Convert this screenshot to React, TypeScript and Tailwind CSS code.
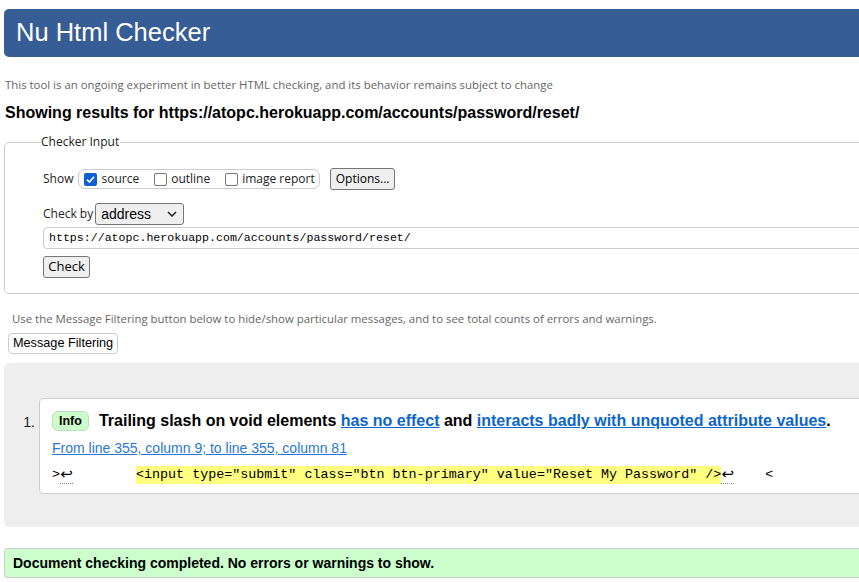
import React from "react";

const ui = { fontFamily: '"Open Sans", "Noto Sans", sans-serif' };
const arial = { fontFamily: '"Liberation Sans", Arial, sans-serif' };
const mono = { fontFamily: '"Liberation Mono", "DejaVu Sans Mono", monospace' };
const sym = { fontFamily: '"DejaVu Sans", sans-serif' };

function Box({ checked, label }: { checked?: boolean; label: string }) {
  return (
    <label className="flex items-center gap-[4px] text-[12px] text-[#222] whitespace-nowrap" style={ui}>
      {checked ? (
        <span className="w-[13px] h-[13px] rounded-[2px] bg-[#0b5fd0] flex items-center justify-center shrink-0">
          <svg width="11" height="11" viewBox="0 0 11 11">
            <path d="M2 5.6 L4.4 8 L9 2.8" stroke="white" strokeWidth="1.7" fill="none" />
          </svg>
        </span>
      ) : (
        <span className="w-[13px] h-[13px] rounded-[2px] border border-[#767676] bg-white shrink-0" />
      )}
      <span>{label}</span>
    </label>
  );
}

export default function App() {
  return (
    <div className="w-[859px] h-[582px] overflow-hidden bg-white">
      <div className="w-[1000px]" style={arial}>
        <div className="ml-[4px] mt-[9px] h-[48px] bg-[#365d95] rounded-l-[5px] flex items-center pl-[12px]">
          <h1 className="text-white text-[25.5px] leading-none" style={arial}>Nu Html Checker</h1>
        </div>
        <p className="ml-[5px] mt-[19px] text-[11.4px] text-[#666]" style={ui}>
          This tool is an ongoing experiment in better HTML checking, and its behavior remains subject to change
        </p>
        <p className="ml-[5px] mt-[10px] text-[16px] font-bold text-black leading-[20px]">
          Showing results for https://atopc.herokuapp.com/accounts/password/reset/
        </p>

        <fieldset className="ml-[4px] mt-[10px] border border-[#ccc] rounded-l-[5px] pl-[38px] h-[161px]">
          <legend className="-ml-[2px] text-[12px] text-[#222] pr-[1px]" style={ui}>Checker Input</legend>
          <div className="flex items-center mt-[17px] h-[22px]">
            <span className="text-[12px] text-[#222] mr-[5px]" style={ui}>Show</span>
            <div className="flex items-center gap-[15px] border border-[#ccc] rounded-[7px] h-[20px] pl-[5px] pr-[4px] shrink-0">
              <Box checked label="source" />
              <Box label="outline" />
              <Box label="image report" />
            </div>
            <button className="ml-[10px] h-[22px] px-[5px] bg-[#efefef] border border-[#767676] rounded-[3px] text-[12px] text-black" style={ui}>
              Options...
            </button>
          </div>
          <div className="flex items-center mt-[13px] h-[22px]">
            <span className="text-[12px] text-[#222] mr-[2px]" style={ui}>Check by</span>
            <div className="w-[89px] h-[22px] border border-[#767676] rounded-[3px] bg-[#efefef] flex items-center justify-between pl-[5px] pr-[6px]">
              <span className="text-[14px] text-black" style={arial}>address</span>
              <svg width="10" height="6" viewBox="0 0 10 6">
                <path d="M1 1 L5 5 L9 1" stroke="#222" strokeWidth="1.5" fill="none" />
              </svg>
            </div>
          </div>
          <div className="mt-[2px] h-[22px] border border-[#ccc] rounded-l-[4px] flex items-center pl-[5px]">
            <span className="text-[11.6px] text-black" style={mono}>https://atopc.herokuapp.com/accounts/password/reset/</span>
          </div>
          <button className="mt-[7px] h-[22px] w-[47px] bg-[#efefef] border border-[#767676] rounded-[3px] text-[13px] text-black" style={ui}>
            Check
          </button>
        </fieldset>

        <p className="ml-[12px] mt-[16px] text-[11.4px] text-[#666]" style={ui}>
          Use the Message Filtering button below to hide/show particular messages, and to see total counts of errors and warnings.
        </p>
        <button className="ml-[8px] mt-[6px] h-[21px] px-[4px] bg-white border border-[#ccc] rounded-[4px] text-[12.7px] text-black" style={arial}>
          Message Filtering
        </button>

        <div className="ml-[4px] mt-[9px] h-[164px] bg-[#eeeeee] rounded-l-[5px] pt-[35px]">
          <div className="flex">
            <div className="w-[35px] text-right pr-[4px] pt-[14px] text-[14px] text-[#222]">1.</div>
            <div className="flex-1 bg-white border border-[#ccc] rounded-l-[4px] h-[96px] pl-[12px] pt-[12px]">
              <div className="flex items-center h-[20px]">
                <span className="h-[20px] px-[6px] rounded-[6px] bg-[#ccffcc] border border-[#bbddbb] text-[12.5px] font-bold text-black flex items-center">Info</span>
                <span className="ml-[10px] text-[16px] font-bold text-black">
                  Trailing slash on void elements{" "}
                  <a className="text-[#0b66cc] underline">has no effect</a> and{" "}
                  <a className="text-[#0b66cc] underline">interacts badly with unquoted attribute values</a>.
                </span>
              </div>
              <div className="mt-[8px] text-[14px] leading-[18px]">
                <a className="text-[#2a78d6] underline">From line 355, column 9; to line 355, column 81</a>
              </div>
              <div className="mt-[9px] flex items-center h-[18px] text-[13.36px] text-black whitespace-pre" style={mono}>
                <span>{">"}</span>
                <span className="w-[13px] h-[18px] flex items-center justify-center border-b border-dotted border-[#888] text-[15px]" style={sym}>↩</span>
                <span className="w-[63px]" />
                <span className="bg-[#ffff80] leading-[18px]">{'<input type="submit" class="btn btn-primary" value="Reset My Password" />'}</span>
                <span className="w-[13px] h-[18px] flex items-center justify-center border-b border-dotted border-[#888] text-[15px]" style={sym}>↩</span>
                <span className="w-[31px]" />
                <span>{"<"}</span>
              </div>
            </div>
          </div>
        </div>

        <div className="ml-[4px] mt-[21px] h-[30px] bg-[#ccffcc] border-y border-l border-[#ccc] rounded-l-[4px] flex items-center pl-[8px]">
          <span className="text-[14px] font-bold text-black">Document checking completed. No errors or warnings to show.</span>
        </div>
      </div>
    </div>
  );
}
